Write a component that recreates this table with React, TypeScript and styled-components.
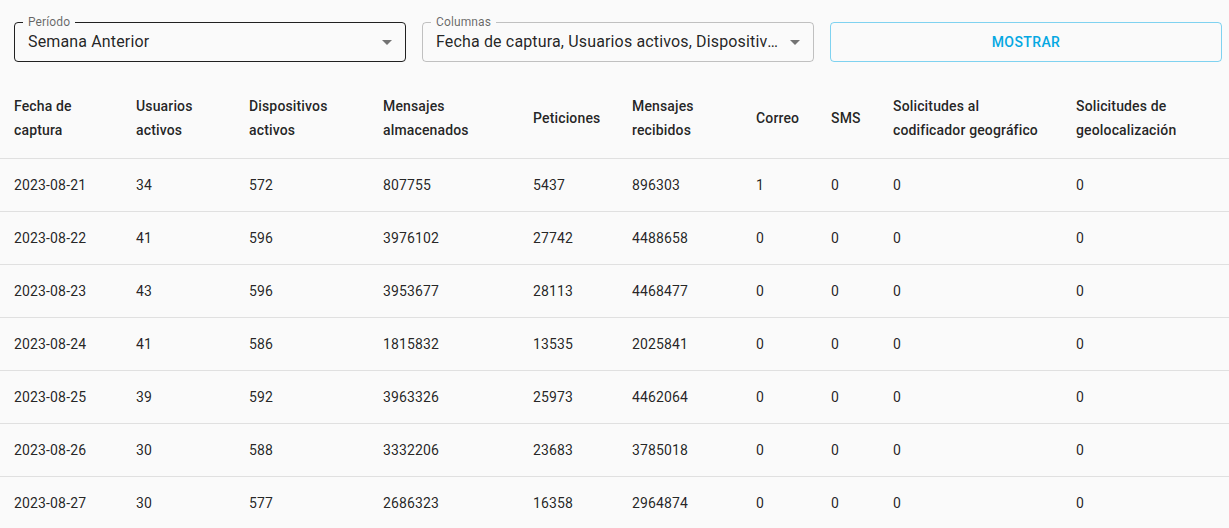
import React from "react";
import styled, { createGlobalStyle } from "styled-components";

const GlobalStyle = createGlobalStyle`
  html, body { margin: 0; padding: 0; background: #fafafa; }
  body {
    font-family: Roboto, "Liberation Sans", Arial, sans-serif;
    color: rgba(0, 0, 0, 0.87);
    -webkit-font-smoothing: antialiased;
  }
  * { box-sizing: border-box; }
`;

const Page = styled.div`
  display: flex;
  flex-direction: column;
  gap: 16px;
  padding-top: 22px;
`;

const Toolbar = styled.div`
  display: grid;
  grid-template-columns: repeat(3, 392px);
  column-gap: 16px;
  padding-left: 14px;
`;

const Field = styled.div`
  position: relative;
  height: 40px;
  cursor: pointer;
`;

const Outline = styled.fieldset<{ $active?: boolean }>`
  position: absolute;
  inset: -5px 0 0 0;
  margin: 0;
  padding: 0 8px;
  border: 1px solid ${(p) => (p.$active ? "rgba(0,0,0,0.87)" : "rgba(0,0,0,0.23)")};
  border-radius: 4px;
  pointer-events: none;
  min-width: 0;
`;

const Legend = styled.legend`
  padding: 0 5px;
  height: 11px;
  font-size: 12px;
  line-height: 11px;
  letter-spacing: 0.00938em;
  color: rgba(0, 0, 0, 0.6);
  white-space: nowrap;
`;

const SelectValue = styled.div`
  height: 40px;
  padding: 0 32px 0 14px;
  font-size: 16px;
  line-height: 40px;
  letter-spacing: 0.00938em;
  color: rgba(0, 0, 0, 0.87);
  white-space: nowrap;
  overflow: hidden;
  text-overflow: ellipsis;
`;

const Arrow = styled.svg`
  position: absolute;
  right: 7px;
  top: 8px;
  width: 24px;
  height: 24px;
  fill: rgba(0, 0, 0, 0.54);
`;

const OutlinedButton = styled.button`
  height: 40px;
  border: 1px solid rgba(3, 169, 230, 0.5);
  border-radius: 4px;
  background: transparent;
  color: #05a8e2;
  font-family: Roboto, "Liberation Sans", Arial, sans-serif;
  font-weight: 500;
  font-size: 14px;
  letter-spacing: 0.02857em;
  text-transform: uppercase;
  cursor: pointer;
`;

const Table = styled.table`
  width: 100%;
  table-layout: fixed;
  border-collapse: collapse;
`;

const HeadCell = styled.th`
  text-align: left;
  vertical-align: middle;
  padding: 16px 8px 16px 14px;
  font-size: 14px;
  font-weight: 500;
  line-height: 24px;
  letter-spacing: 0.01071em;
  color: rgba(0, 0, 0, 0.87);
  border-bottom: 1px solid rgb(224, 224, 224);
`;

const Cell = styled.td`
  text-align: left;
  padding: 16px 8px 16px 14px;
  font-size: 14px;
  font-weight: 400;
  line-height: 20px;
  letter-spacing: 0.01071em;
  color: rgba(0, 0, 0, 0.87);
  border-bottom: 1px solid rgb(224, 224, 224);
  white-space: nowrap;
`;

const columns: { label: string; width: number }[] = [
  { label: "Fecha de captura", width: 122 },
  { label: "Usuarios activos", width: 113 },
  { label: "Dispositivos activos", width: 134 },
  { label: "Mensajes almacenados", width: 150 },
  { label: "Peticiones", width: 99 },
  { label: "Mensajes recibidos", width: 124 },
  { label: "Correo", width: 75 },
  { label: "SMS", width: 62 },
  { label: "Solicitudes al codificador geográfico", width: 183 },
  { label: "Solicitudes de geolocalización", width: 167 },
];

const rows: (string | number)[][] = [
  ["2023-08-21", 34, 572, 807755, 5437, 896303, 1, 0, 0, 0],
  ["2023-08-22", 41, 596, 3976102, 27742, 4488658, 0, 0, 0, 0],
  ["2023-08-23", 43, 596, 3953677, 28113, 4468477, 0, 0, 0, 0],
  ["2023-08-24", 41, 586, 1815832, 13535, 2025841, 0, 0, 0, 0],
  ["2023-08-25", 39, 592, 3963326, 25973, 4462064, 0, 0, 0, 0],
  ["2023-08-26", 30, 588, 3332206, 23683, 3785018, 0, 0, 0, 0],
  ["2023-08-27", 30, 577, 2686323, 16358, 2964874, 0, 0, 0, 0],
];

const SelectField: React.FC<{ label: string; value: string; active?: boolean }> = ({
  label,
  value,
  active,
}) => (
  <Field>
    <SelectValue>{value}</SelectValue>
    <Arrow viewBox="0 0 24 24" aria-hidden="true">
      <path d="M7 10l5 5 5-5z" />
    </Arrow>
    <Outline $active={active}>
      <Legend>{label}</Legend>
    </Outline>
  </Field>
);

export default function App() {
  return (
    <>
      <GlobalStyle />
      <Page>
        <Toolbar>
          <SelectField label="Período" value="Semana Anterior" active />
          <SelectField
            label="Columnas"
            value="Fecha de captura, Usuarios activos, Dispositivos activos, Mensajes almacenados, Peticiones"
          />
          <OutlinedButton>Mostrar</OutlinedButton>
        </Toolbar>
        <Table>
          <colgroup>
            {columns.map((c) => (
              <col key={c.label} style={{ width: c.width }} />
            ))}
          </colgroup>
          <thead>
            <tr>
              {columns.map((c) => (
                <HeadCell key={c.label}>{c.label}</HeadCell>
              ))}
            </tr>
          </thead>
          <tbody>
            {rows.map((r) => (
              <tr key={String(r[0])}>
                {r.map((v, i) => (
                  <Cell key={i}>{v}</Cell>
                ))}
              </tr>
            ))}
          </tbody>
        </Table>
      </Page>
    </>
  );
}
